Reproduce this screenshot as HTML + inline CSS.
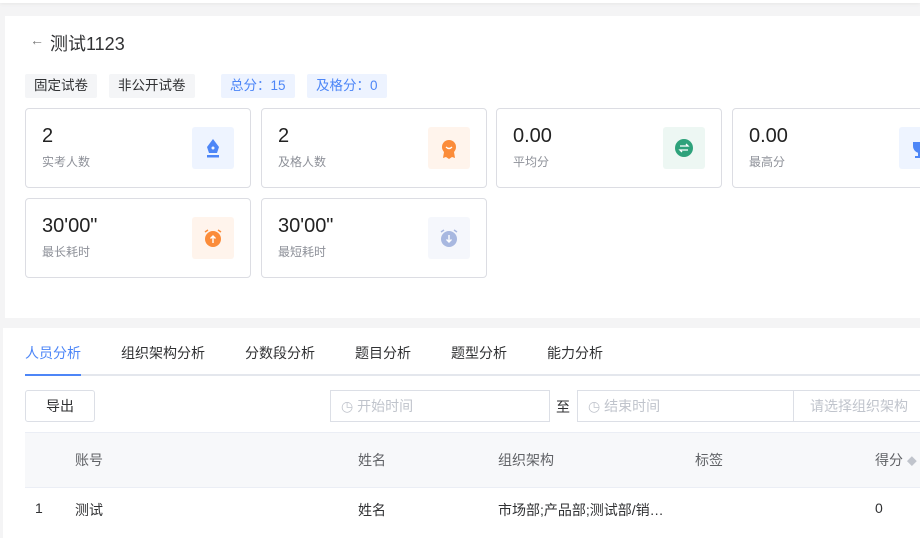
<!DOCTYPE html>
<html><head><meta charset="utf-8"><style>
*{box-sizing:border-box;margin:0;padding:0}
body{width:920px;height:531px;overflow:hidden;background:#f4f4f5;font-family:"Liberation Sans","Noto Sans CJK SC",sans-serif;position:relative;color:#303133}
.a{position:absolute}
.p1{left:5px;top:16px;width:920px;height:302px;background:#fff}
.p2{left:3px;top:328px;width:920px;height:210px;background:#fff}
.tag{top:74px;height:24px;line-height:24px;font-size:13.5px;padding:0 9px;background:#f4f5f7;color:#303133;border-radius:2px}
.tb{background:#edf3ff;color:#4d86f7}
.card{width:226px;height:80px;border:1px solid #dcdde3;border-radius:4px;background:#fff}
.card .v{position:absolute;left:16px;top:16px;font-size:20px;color:#222}
.card .l{position:absolute;left:16px;top:44px;font-size:12px;color:#8d9098}
.card .ic{position:absolute;left:166px;top:18px;width:42px;height:42px;border-radius:3px}
.tab{top:343px;font-size:14px;color:#303133}
.th{font-size:14px;color:#606266;top:450px}
.td{font-size:14px;color:#303133;top:500px}
.inp{top:390px;height:32px;border:1px solid #dcdfe6;font-size:14px;color:#c0c4cc;line-height:30px;background:#fff}
</style></head><body>
<div class="a" style="left:0;top:0;width:920px;height:3px;background:#fff;box-shadow:0 1px 3px #e6e6e6"></div>
<div class="a p1"></div>
<div class="a p2"></div>
<div class="a" style="left:30px;top:32px;font-size:14px;color:#777">←</div>
<div class="a" style="left:50px;top:30px;font-size:18px;color:#303133">测试1123</div>
<div class="a tag" style="left:25px">固定试卷</div>
<div class="a tag" style="left:109px">非公开试卷</div>
<div class="a tag tb" style="left:221px">总分：15</div>
<div class="a tag tb" style="left:307px">及格分：0</div>

<div class="a card" style="left:25px;top:108px"><div class="v">2</div><div class="l">实考人数</div><div class="ic" style="background:#eef4ff"><svg width="42" height="42"><path d="M21 12 L27 20 L25 26 L17 26 L15 20Z" fill="#4d86f7"/><circle cx="21" cy="21" r="1.5" fill="#eef4ff"/><rect x="15" y="28" width="12" height="2.5" fill="#4d86f7"/></svg></div></div>
<div class="a card" style="left:261px;top:108px"><div class="v">2</div><div class="l">及格人数</div><div class="ic" style="background:#fff4ec"><svg width="42" height="42"><circle cx="21" cy="20" r="7" fill="#fb8c3a"/><path d="M16 25 L15 31 L18 30 L21 32 L24 30 L27 31 L26 25Z" fill="#fb8c3a"/><path d="M18 20 Q21 23 24 20" stroke="#fff" stroke-width="1.3" fill="none"/></svg></div></div>
<div class="a card" style="left:496px;top:108px"><div class="v">0.00</div><div class="l">平均分</div><div class="ic" style="background:#edf7f3"><svg width="42" height="42"><circle cx="21" cy="21" r="9" fill="#2ea27b"/><path d="M17 19h8l-2-2M25 23h-8l2 2" stroke="#fff" stroke-width="1.3" fill="none"/></svg></div></div>
<div class="a card" style="left:732px;top:108px"><div class="v">0.00</div><div class="l">最高分</div><div class="ic" style="background:#eef4ff"><svg width="42" height="42"><path d="M14 15h14v4a7 7 0 0 1-14 0z" fill="#4d86f7"/><rect x="19" y="25" width="4" height="4" fill="#4d86f7"/><rect x="16" y="29" width="10" height="2" fill="#4d86f7"/></svg></div></div>

<div class="a card" style="left:25px;top:198px"><div class="v">30'00"</div><div class="l">最长耗时</div><div class="ic" style="background:#fff4ec"><svg width="42" height="42"><circle cx="21" cy="22" r="8" fill="#fb8c3a"/><path d="M13 15l3-2M29 15l-3-2" stroke="#fb8c3a" stroke-width="1.5"/><path d="M21 26v-7M18.5 21.5L21 19l2.5 2.5" stroke="#fff" stroke-width="1.4" fill="none"/></svg></div></div>
<div class="a card" style="left:261px;top:198px"><div class="v">30'00"</div><div class="l">最短耗时</div><div class="ic" style="background:#f5f7fc"><svg width="42" height="42"><circle cx="21" cy="22" r="8" fill="#a8b8e0"/><path d="M13 15l3-2M29 15l-3-2" stroke="#a8b8e0" stroke-width="1.5"/><path d="M21 18v7M18.5 22.5L21 25l2.5-2.5" stroke="#fff" stroke-width="1.4" fill="none"/></svg></div></div>

<div class="a tab" style="left:25px;color:#4d86f7">人员分析</div>
<div class="a tab" style="left:121px">组织架构分析</div>
<div class="a tab" style="left:245px">分数段分析</div>
<div class="a tab" style="left:355px">题目分析</div>
<div class="a tab" style="left:451px">题型分析</div>
<div class="a tab" style="left:547px">能力分析</div>
<div class="a" style="left:25px;top:374px;width:895px;height:2px;background:#e4e7ed"></div>
<div class="a" style="left:25px;top:374px;width:56px;height:2px;background:#4d86f7"></div>

<div class="a" style="left:25px;top:390px;width:70px;height:32px;border:1px solid #dcdfe6;border-radius:3px;font-size:14px;line-height:30px;text-align:center;color:#303133">导出</div>
<div class="a inp" style="left:330px;width:220px;padding-left:10px">◷ 开始时间</div>
<div class="a" style="left:556px;top:397px;font-size:14px">至</div>
<div class="a inp" style="left:577px;width:217px;padding-left:10px">◷ 结束时间</div>
<div class="a inp" style="left:793px;width:140px;padding-left:16px">请选择组织架构</div>

<div class="a" style="left:25px;top:432px;width:895px;height:56px;background:#f7f8fa;border-top:1px solid #ebeef5;border-bottom:1px solid #ebeef5"></div>
<div class="a th" style="left:75px">账号</div>
<div class="a th" style="left:358px">姓名</div>
<div class="a th" style="left:498px">组织架构</div>
<div class="a th" style="left:695px">标签</div>
<div class="a th" style="left:875px">得分 <span style="color:#c0c4cc;font-size:10px">◆</span></div>
<div class="a td" style="left:35px">1</div>
<div class="a td" style="left:75px">测试</div>
<div class="a td" style="left:358px">姓名</div>
<div class="a td" style="left:498px">市场部;产品部;测试部/销…</div>
<div class="a td" style="left:875px">0</div>
</body></html>
